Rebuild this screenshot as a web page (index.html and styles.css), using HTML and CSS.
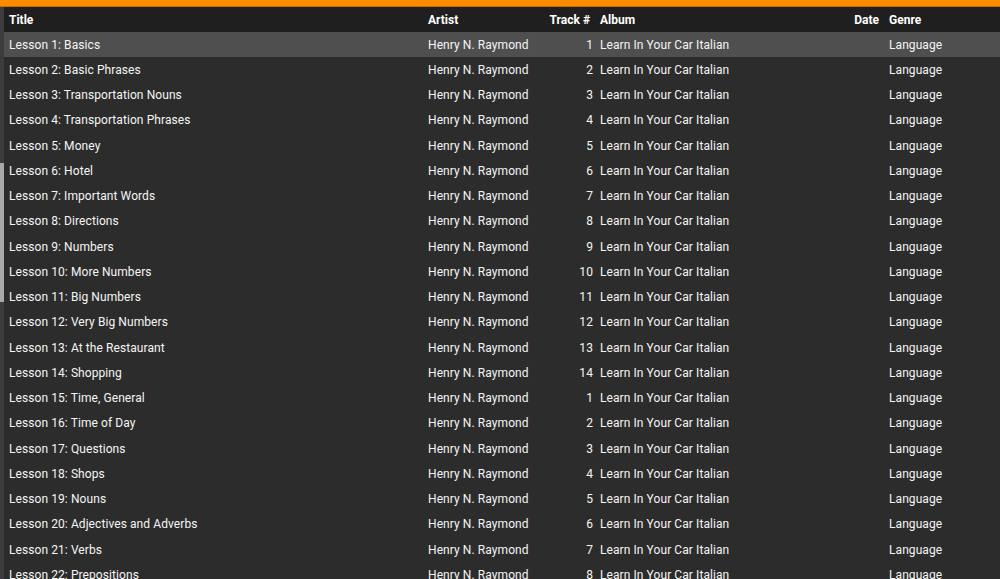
FILE: index.html
```html
<!DOCTYPE html>
<html lang="en">
<head>
    <meta charset="UTF-8">
    <meta name="viewport" content="width=device-width, initial-scale=1.0">
    <title>Library</title>
    <link rel="stylesheet" href="styles.css">
</head>
<body>
    <div class="topbar"></div>
    <div class="main">
        <div class="sidestrip">
            <div class="thumb"></div>
        </div>
        <div class="tracks">
            <div class="row head">
                <span>Title</span>
                <span>Artist</span>
                <span class="num">Track #</span>
                <span>Album</span>
                <span class="num">Date</span>
                <span>Genre</span>
            </div>
            <div class="row selected">
                <span>Lesson 1: Basics</span><span>Henry N. Raymond</span><span class="num">1</span><span>Learn In Your Car Italian</span><span class="num"></span><span>Language</span>
            </div>
            <div class="row">
                <span>Lesson 2: Basic Phrases</span><span>Henry N. Raymond</span><span class="num">2</span><span>Learn In Your Car Italian</span><span class="num"></span><span>Language</span>
            </div>
            <div class="row">
                <span>Lesson 3: Transportation Nouns</span><span>Henry N. Raymond</span><span class="num">3</span><span>Learn In Your Car Italian</span><span class="num"></span><span>Language</span>
            </div>
            <div class="row">
                <span>Lesson 4: Transportation Phrases</span><span>Henry N. Raymond</span><span class="num">4</span><span>Learn In Your Car Italian</span><span class="num"></span><span>Language</span>
            </div>
            <div class="row">
                <span>Lesson 5: Money</span><span>Henry N. Raymond</span><span class="num">5</span><span>Learn In Your Car Italian</span><span class="num"></span><span>Language</span>
            </div>
            <div class="row">
                <span>Lesson 6: Hotel</span><span>Henry N. Raymond</span><span class="num">6</span><span>Learn In Your Car Italian</span><span class="num"></span><span>Language</span>
            </div>
            <div class="row">
                <span>Lesson 7: Important Words</span><span>Henry N. Raymond</span><span class="num">7</span><span>Learn In Your Car Italian</span><span class="num"></span><span>Language</span>
            </div>
            <div class="row">
                <span>Lesson 8: Directions</span><span>Henry N. Raymond</span><span class="num">8</span><span>Learn In Your Car Italian</span><span class="num"></span><span>Language</span>
            </div>
            <div class="row">
                <span>Lesson 9: Numbers</span><span>Henry N. Raymond</span><span class="num">9</span><span>Learn In Your Car Italian</span><span class="num"></span><span>Language</span>
            </div>
            <div class="row">
                <span>Lesson 10: More Numbers</span><span>Henry N. Raymond</span><span class="num">10</span><span>Learn In Your Car Italian</span><span class="num"></span><span>Language</span>
            </div>
            <div class="row">
                <span>Lesson 11: Big Numbers</span><span>Henry N. Raymond</span><span class="num">11</span><span>Learn In Your Car Italian</span><span class="num"></span><span>Language</span>
            </div>
            <div class="row">
                <span>Lesson 12: Very Big Numbers</span><span>Henry N. Raymond</span><span class="num">12</span><span>Learn In Your Car Italian</span><span class="num"></span><span>Language</span>
            </div>
            <div class="row">
                <span>Lesson 13: At the Restaurant</span><span>Henry N. Raymond</span><span class="num">13</span><span>Learn In Your Car Italian</span><span class="num"></span><span>Language</span>
            </div>
            <div class="row">
                <span>Lesson 14: Shopping</span><span>Henry N. Raymond</span><span class="num">14</span><span>Learn In Your Car Italian</span><span class="num"></span><span>Language</span>
            </div>
            <div class="row">
                <span>Lesson 15: Time, General</span><span>Henry N. Raymond</span><span class="num">1</span><span>Learn In Your Car Italian</span><span class="num"></span><span>Language</span>
            </div>
            <div class="row">
                <span>Lesson 16: Time of Day</span><span>Henry N. Raymond</span><span class="num">2</span><span>Learn In Your Car Italian</span><span class="num"></span><span>Language</span>
            </div>
            <div class="row">
                <span>Lesson 17: Questions</span><span>Henry N. Raymond</span><span class="num">3</span><span>Learn In Your Car Italian</span><span class="num"></span><span>Language</span>
            </div>
            <div class="row">
                <span>Lesson 18: Shops</span><span>Henry N. Raymond</span><span class="num">4</span><span>Learn In Your Car Italian</span><span class="num"></span><span>Language</span>
            </div>
            <div class="row">
                <span>Lesson 19: Nouns</span><span>Henry N. Raymond</span><span class="num">5</span><span>Learn In Your Car Italian</span><span class="num"></span><span>Language</span>
            </div>
            <div class="row">
                <span>Lesson 20: Adjectives and Adverbs</span><span>Henry N. Raymond</span><span class="num">6</span><span>Learn In Your Car Italian</span><span class="num"></span><span>Language</span>
            </div>
            <div class="row">
                <span>Lesson 21: Verbs</span><span>Henry N. Raymond</span><span class="num">7</span><span>Learn In Your Car Italian</span><span class="num"></span><span>Language</span>
            </div>
            <div class="row">
                <span>Lesson 22: Prepositions</span><span>Henry N. Raymond</span><span class="num">8</span><span>Learn In Your Car Italian</span><span class="num"></span><span>Language</span>
            </div>
        </div>
    </div>
</body>
</html>
```

FILE: styles.css
```css
body {
    margin: 0;
    background: #2c2c2c;
    font-family: Roboto, "Liberation Sans", sans-serif;
    font-size: 12px;
    letter-spacing: 0.08px;
    color: #f5f5f5;
    overflow: hidden;
    height: 579px;
}

.topbar {
    height: 6px;
    background: #fb8c00;
    border-bottom: 1px solid #c46e05;
}

.main {
    display: flex;
}

.sidestrip {
    width: 4px;
    flex: none;
    background: #3c3c3c;
    padding-top: 156px;
}

.thumb {
    height: 139px;
    background: #a9a9a9;
}

.tracks {
    flex: 1;
}

.row {
    display: grid;
    grid-template-columns: 419px 117px 55px 205px 84px 1fr;
    height: 25.25px;
    align-items: center;
    background: #2c2c2c;
}

.row span {
    padding: 0 5px;
    white-space: nowrap;
    overflow: hidden;
}

.row .num {
    text-align: right;
    padding-right: 2px;
}

.head {
    height: 25px;
    background: #1f1f1f;
    font-weight: bold;
    letter-spacing: 0;
    color: #ffffff;
}

.head .num {
    padding-right: 5px;
}

.selected {
    background: #4f4f4f;
}
```
